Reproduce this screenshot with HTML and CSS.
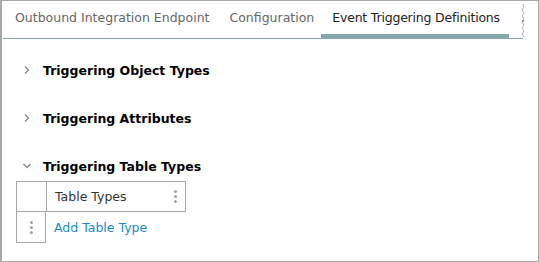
FILE: index.html
```html
<!DOCTYPE html>
<html>
<head>
<meta charset="utf-8">
<link rel="stylesheet" href="styles.css">
</head>
<body>
<div class="frame">
  <div class="tabbar">
    <div class="tab">Outbound Integration Endpoint</div>
    <div class="tab">Configuration</div>
    <div class="tab active">Event Triggering Definitions</div>
    <div class="overflow">
      <svg width="8" height="34" viewBox="0 0 8 34"><path d="M4 0 L5 3 L3 6 L5 9 L3 12 L5 15 L3 18 L5 21 L3 24 L5 27 L3 30 L5 33" fill="none" stroke="#b0b0b0" stroke-width="1"/><rect x="3" y="16" width="2" height="2" fill="#7d94b8"/></svg>
    </div>
  </div>
  <div class="content">
    <div class="section">
      <svg class="chev" width="10" height="10" viewBox="0 0 10 10"><path d="M3 1.5 L6.5 5 L3 8.5" fill="none" stroke="#8a8a8a" stroke-width="1.4"/></svg>
      <span class="title">Triggering Object Types</span>
    </div>
    <div class="section">
      <svg class="chev" width="10" height="10" viewBox="0 0 10 10"><path d="M3 1.5 L6.5 5 L3 8.5" fill="none" stroke="#8a8a8a" stroke-width="1.4"/></svg>
      <span class="title">Triggering Attributes</span>
    </div>
    <div class="section open">
      <svg class="chev" width="10" height="10" viewBox="0 0 10 10"><path d="M1.5 3 L5 6.5 L8.5 3" fill="none" stroke="#8a8a8a" stroke-width="1.4"/></svg>
      <span class="title">Triggering Table Types</span>
    </div>
    <div class="grid">
      <div class="cell c1"></div>
      <div class="cell c2"><span>Table Types</span><span class="kebab"><i></i><i></i><i></i></span></div>
      <div class="cell c1 r2"><span class="kebab"><i></i><i></i><i></i></span></div>
      <div class="cell c2 r2"><a class="link">Add Table Type</a></div>
    </div>
  </div>
</div>
</body>
</html>
```
FILE: styles.css
```css
html, body { margin: 0; padding: 0; background: #fff; }
.frame {
  width: 539px; height: 262px; box-sizing: border-box;
  border: 1px solid #a8a8a8; border-left-width: 2px;
  font-family: "DejaVu Sans", Verdana, sans-serif; font-size: 12.5px;
}
.tabbar {
  display: flex; align-items: stretch; height: 37px;
  border-bottom: 1px solid #88a7ac;
  margin: 0 15px 0 1px; padding-left: 2px;
}
.tab {
  display: flex; align-items: center; padding: 0 10px 4px;
  color: #666; white-space: nowrap; box-sizing: border-box;
}
.tab.active {
  color: #222; border-bottom: 4px solid #84a8ae; padding: 0 9px 0 11px;
  margin-left: -3px; letter-spacing: -0.2px;
}
.overflow { margin-left: auto; display: flex; align-items: flex-end; margin-right: -4px; }
.overflow svg { display: block; }
.content { padding: 22px 0 0 14px; }
.section { display: flex; align-items: center; height: 18px; margin-bottom: 30px; }
.section.open { margin-bottom: 6px; }
.chev { margin: 0 11px 0 6px; display: block; }
.title { font-weight: bold; color: #000; }
.grid {
  display: grid; grid-template-columns: 30px 140px; grid-template-rows: 31px 31px;
}
.cell { box-sizing: border-box; display: flex; align-items: center; }
.c1 { border: 1px solid #a6a6a6; border-right: none; justify-content: center; }
.c2 { border: 1px solid #a6a6a6; padding: 0 8px; justify-content: space-between; color: #333; }
.r2 { border-top: none; }
.c2.r2 { border: none; }
.c1.r2 { border-right: 1px solid #a6a6a6; }
.link { color: #1a8ad4; }
.kebab { display: flex; flex-direction: column; gap: 2px; }
.kebab i { display: block; width: 3px; height: 3px; border-radius: 50%; background: #a0a0a0; }
```
